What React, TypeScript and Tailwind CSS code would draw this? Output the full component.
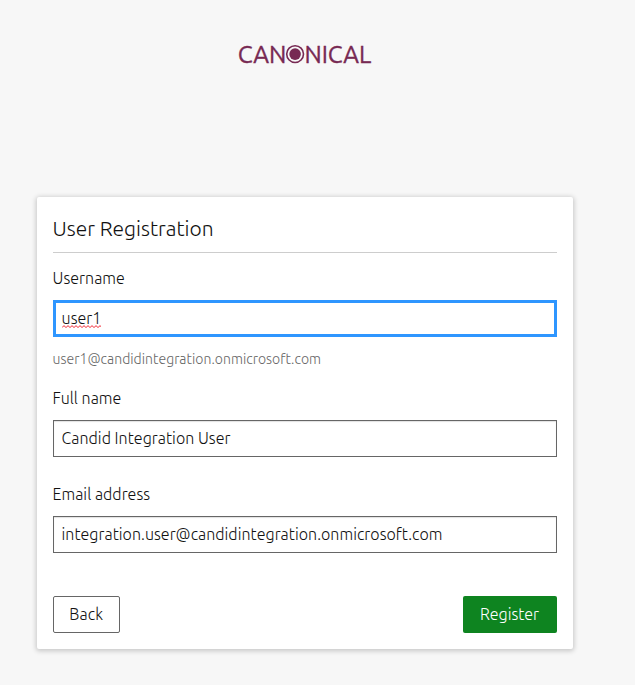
import { useState } from "react";

function Logo() {
  return (
    <svg width="144" height="34" viewBox="-5 -8 144 34" role="img" aria-label="Canonical" className="block overflow-visible">
      <g fill="#772953" stroke="#772953" strokeWidth="0.35" fontFamily="Ubuntu, 'Open Sans', 'Noto Sans', sans-serif" fontSize="24" fontWeight="400">
        <text x="-0.2" y="20" textLength="48.6" lengthAdjust="spacingAndGlyphs">CAN</text>
        <text x="66.4" y="20" textLength="66.8" lengthAdjust="spacingAndGlyphs">NICAL</text>
      </g>
      <circle cx="57.1" cy="11.1" r="8.4" fill="#f7f7f7" stroke="#772953" strokeWidth="1.6" />
      <circle cx="57.1" cy="11.1" r="5.8" fill="#772953" />
    </svg>
  );
}

// Spell-check underline: a small zigzag repeated across the word.
function Squiggle() {
  const points = Array.from({ length: 21 }, (_, i) => `${i * 2},${i % 2 ? 0.6 : 2.6}`).join(" ");
  return (
    <svg width="39" height="3" viewBox="0 0 39 3" className="absolute bottom-[2px] left-0">
      <polyline points={points} fill="none" stroke="#f0202c" strokeWidth="1" />
    </svg>
  );
}

type FieldProps = { label: string; initial: string };

function Field({ label, initial }: FieldProps) {
  const [value, setValue] = useState(initial);
  return (
    <label className="block">
      <span className="-ml-[0.4px] block h-6 leading-6 tracking-[0.03px]">{label}</span>
      <input
        value={value}
        onChange={(e) => setValue(e.target.value)}
        className="mt-[10px] block h-[37px] w-full border border-[#666] pr-2 pb-0.5 pl-[7.5px] tracking-[0.035px] shadow-[inset_0_1px_1px_rgba(0,0,0,0.12)] outline-none"
      />
    </label>
  );
}

export default function App() {
  return (
    <div className="h-[685px] w-[635px] overflow-hidden bg-[#f7f7f7] pl-[37px] pt-[35px] font-['Ubuntu','Open_Sans','Noto_Sans',sans-serif] text-base font-light text-[#111]">
      <header className="flex h-[162px] w-[536px] justify-center">
        <Logo />
      </header>
      <main className="h-[452px] w-[536px] rounded-[2px] bg-white px-4 pt-4 shadow-[0_1px_5px_1px_rgba(0,0,0,0.2)]">
        <h1 className="h-10 border-b border-[#cdcdcd] text-[21px] leading-[30px] -indent-[0.5px]">User Registration</h1>
        <div className="h-[120px] pt-[13px]">
          <span className="-ml-[0.4px] block h-6 leading-6 tracking-[0.03px]">Username</span>
          <div className="mt-[10px] flex h-[37px] items-center border-3 border-[#2e96ff] px-[5.6px] pb-0.5">
            <span className="relative leading-6 tracking-[0.05px]">
              user1
              <Squiggle />
            </span>
          </div>
          <p className="-ml-[0.4px] mt-3 text-sm leading-5 tracking-[0.035px] text-[#666]">user1@candidintegration.onmicrosoft.com</p>
        </div>
        <div className="h-24 pt-[13px]">
          <Field label="Full name" initial="Candid Integration User" />
        </div>
        <div className="pt-[13px]">
          <Field label="Email address" initial="integration.user@candidintegration.onmicrosoft.com" />
        </div>
        <div className="mt-[43px] flex justify-between">
          <button className="h-[37px] w-[67px] rounded-[2px] border border-[#666] pr-[0.5px] pb-0.5 tracking-[0.1px]">Back</button>
          <button className="h-[37px] w-[94px] rounded-[2px] bg-[#0e8420] pr-px pb-0.5 text-white">Register</button>
        </div>
      </main>
    </div>
  );
}
